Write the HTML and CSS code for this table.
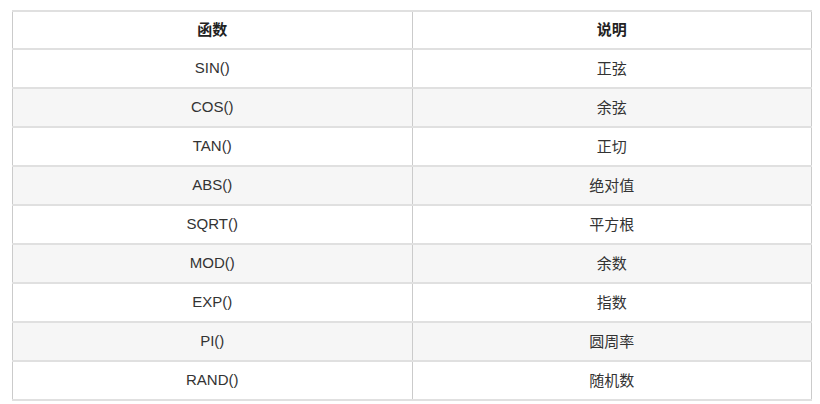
FILE: index.html
```html
<!DOCTYPE html>
<html lang="zh">
<head>
<meta charset="utf-8">
<link rel="stylesheet" href="styles.css">
</head>
<body>
<table class="fn-table">
  <thead>
    <tr><th>函数</th><th>说明</th></tr>
  </thead>
  <tbody>
    <tr><td>SIN()</td><td>正弦</td></tr>
    <tr><td>COS()</td><td>余弦</td></tr>
    <tr><td>TAN()</td><td>正切</td></tr>
    <tr><td>ABS()</td><td>绝对值</td></tr>
    <tr><td>SQRT()</td><td>平方根</td></tr>
    <tr><td>MOD()</td><td>余数</td></tr>
    <tr><td>EXP()</td><td>指数</td></tr>
    <tr><td>PI()</td><td>圆周率</td></tr>
    <tr><td>RAND()</td><td>随机数</td></tr>
  </tbody>
</table>
</body>
</html>
```

FILE: styles.css
```css
html, body {
  margin: 0;
  background: #fff;
}
body {
  padding: 10px 0 0 12px;
  font-family: "Liberation Sans", Arial, "Noto Sans CJK SC", sans-serif;
  font-size: 15px;
  color: #333;
}
.fn-table {
  width: 800px;
  border-collapse: collapse;
  table-layout: fixed;
}
.fn-table th,
.fn-table td {
  border-top: 2px solid #e0e0e0;
  border-left: 1px solid #cbcbcb;
  border-right: 1px solid #cbcbcb;
  text-align: center;
  padding: 0 0 3px;
  box-sizing: border-box;
}
.fn-table th {
  height: 38px;
  font-weight: bold;
  color: #222;
}
.fn-table td {
  height: 39px;
}
.fn-table tbody tr:last-child td {
  border-bottom: 2px solid #e0e0e0;
}
.fn-table tbody tr:nth-child(even) td {
  background: #f6f6f6;
}
```
